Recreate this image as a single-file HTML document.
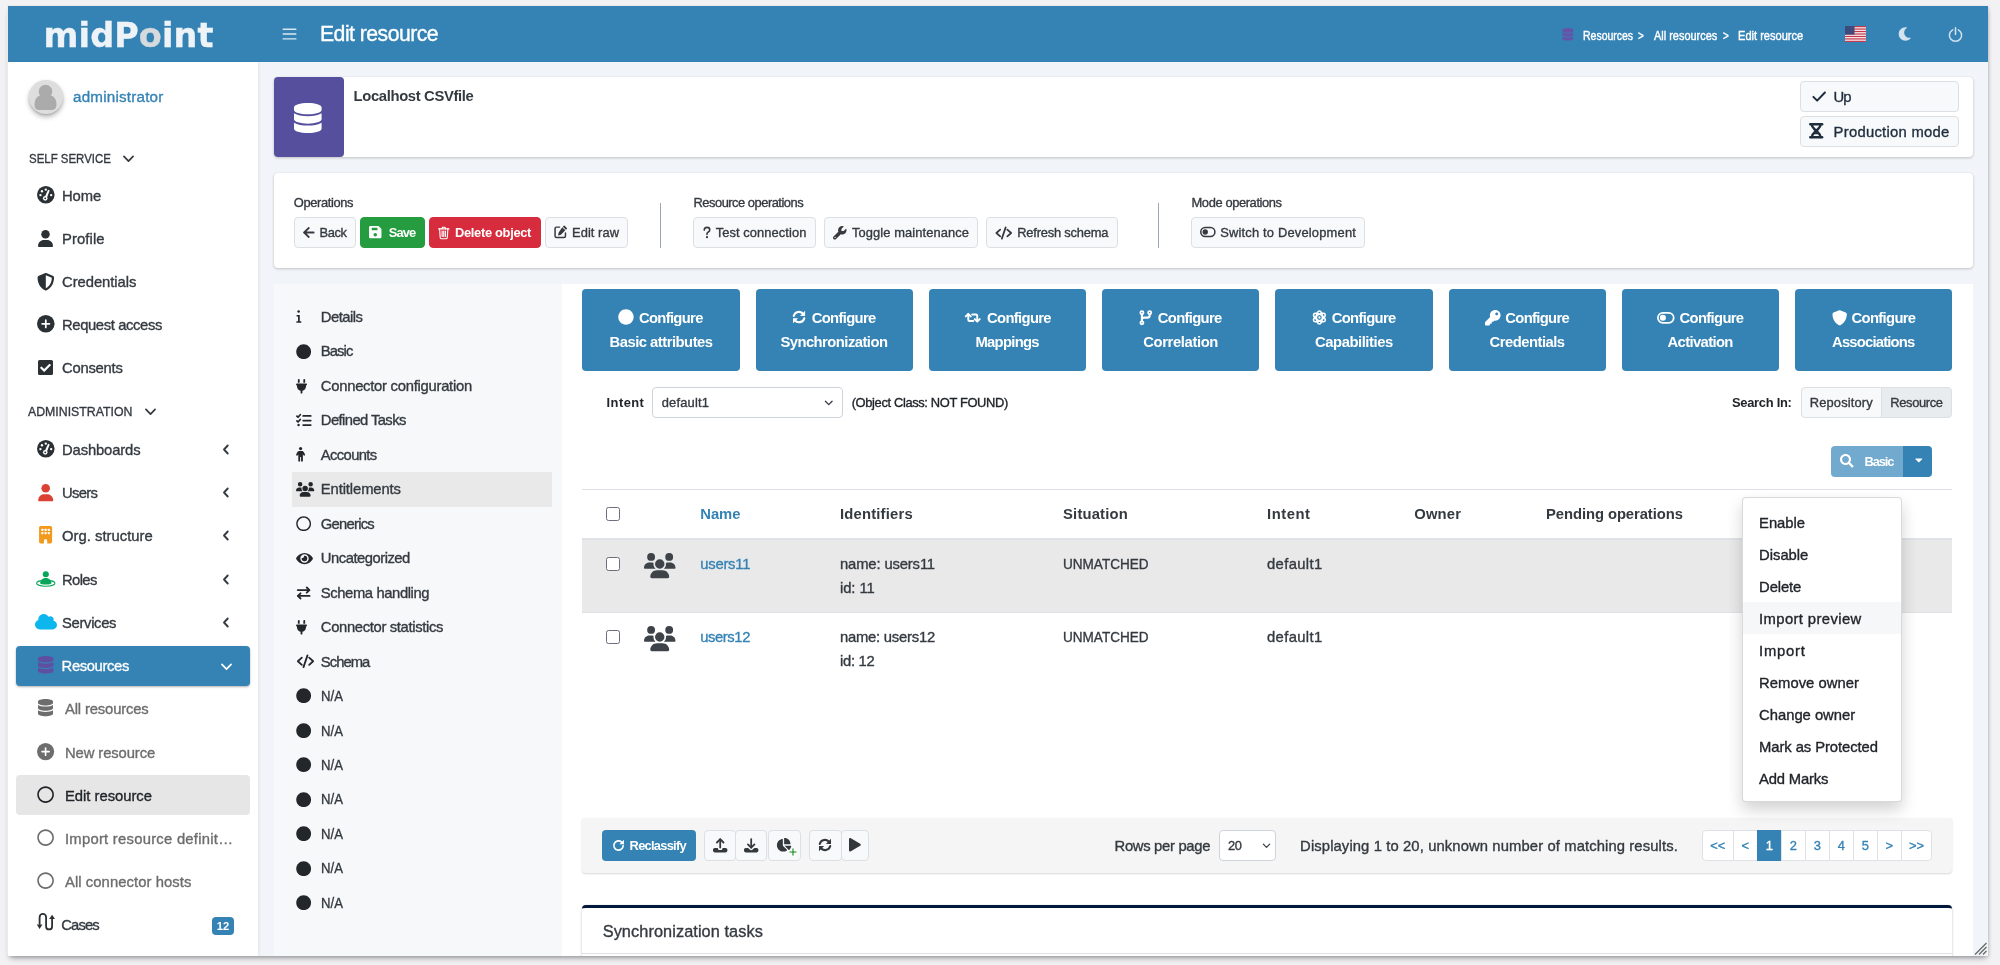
<!DOCTYPE html>
<html lang="en">
<head>
<meta charset="utf-8">
<title>Edit resource</title>
<style>
*{box-sizing:border-box}
html,body{margin:0;padding:0}
body{width:2000px;height:965px;overflow:hidden;background:#f2f2f4;position:relative;
 font-family:"Liberation Sans",sans-serif;font-size:14.8px;color:#212529;line-height:1}
.abs,.t{position:absolute}
.t{white-space:nowrap;-webkit-text-stroke:.35px currentColor}
svg.ic{display:block;position:absolute;overflow:visible}
b,.b{font-weight:bold}
#shadow{position:absolute;left:8px;top:6px;width:1980px;height:950px;background:#f1f4f8;box-shadow:-1px -1px 0 0 #ece9e8,0 4px 6px -2px rgba(0,0,0,.32),1px 1px 3px rgba(0,0,0,.14)}
#frame{position:absolute;left:0;top:0;width:2000px;height:965px;clip-path:inset(6px 12px 9px 8px);will-change:transform}
#header{left:8px;top:6px;width:1980px;height:56px;background:#3583b5}
#sidebar{left:8px;top:62px;width:250px;height:894px;background:#fff;box-shadow:1px 0 3px rgba(0,0,0,.07)}
.logo{font-family:"DejaVu Sans",sans-serif;font-weight:bold;font-size:33.5px;color:#eef3f8;letter-spacing:0.08px}
.sb{font-size:15px;color:#343a40}
.sb2{font-size:15px;color:#6c757d}
.bc{font-size:12.4px;color:#fff;-webkit-text-stroke:.4px #fff}
.hd{font-size:13.2px;color:#343a40;letter-spacing:.1px}
.card{background:#fff;border-radius:4px;box-shadow:0 0 1px rgba(0,0,0,.125),0 1px 3px rgba(0,0,0,.2)}
.btn{position:absolute;border:1px solid #dcdfe3;background:#f8f9fa;border-radius:4px;color:#343a40}
.btn .t{top:50%}
.nav{font-size:14px;color:#343a40}
.cfg{position:absolute;top:289px;height:82px;width:158px;background:#3583b5;border-radius:4px;color:#fff;font-weight:bold;font-size:14.6px;text-align:center}
.cfg .t{left:0;width:100%;text-align:center}
.th{font-weight:bold;font-size:14.6px;color:#212529}
.td{font-size:14.6px;color:#343a40}
.link{color:#3583b5}
.mi{font-size:14.8px;color:#212529;left:1759px}
.pg{position:absolute;top:830px;height:32px;border:1px solid #dee2e6;background:#fff;color:#3583b5;font-size:13.4px;text-align:center;line-height:30px}
</style>
</head>
<body>
<div id="shadow"></div>
<div id="frame">
<div id="header" class="abs"></div>
<div class="t logo" style="left:43.600px;top:16px;line-height:39px;height:39px">midP<span style="color:#d6dadd">o</span>int</div>
<svg class="ic" width="15" height="16" viewBox="0 0 448 512" fill="#dbe8f1" style="color:#dbe8f1;left:281.700px;top:26px"><rect x="0" y="80" width="448" height="44" rx="20"/><rect x="0" y="234" width="448" height="44" rx="20"/><rect x="0" y="388" width="448" height="44" rx="20"/></svg>
<div class="t " style="left:320px;top:22px;font-size:21.2px;line-height:23px;height:23px;letter-spacing:-0.52px;color:#fff;">Edit resource</div>
<svg class="ic" width="11.5" height="12.5" viewBox="0 0 448 512" fill="#6454a8" style="color:#6454a8;left:1562px;top:28.200px"><path d="M448 73.143v45.714C448 159.143 347.667 192 224 192S0 159.143 0 118.857V73.143C0 32.857 100.333 0 224 0s224 32.857 224 73.143zM448 176v102.857C448 319.143 347.667 352 224 352S0 319.143 0 278.857V176c48.125 33.143 136.208 48.572 224 48.572S399.874 209.143 448 176zm0 160v102.857C448 479.143 347.667 512 224 512S0 479.143 0 438.857V336c48.125 33.143 136.208 48.572 224 48.572S399.874 369.143 448 336z"/></svg>
<div class="t bc" style="left:1583px;top:29px;font-size:12.4px;line-height:14px;height:14px;transform:scaleX(0.8453);transform-origin:0 50%;color:#fff;">Resources</div>
<div class="t bc" style="left:1638.4px;top:29px;font-size:12.4px;line-height:14px;height:14px;transform:scaleX(0.8009);transform-origin:0 50%;color:#fff;">&gt;</div>
<div class="t bc" style="left:1654px;top:29px;font-size:12.4px;line-height:14px;height:14px;transform:scaleX(0.8832);transform-origin:0 50%;color:#fff;">All resources</div>
<div class="t bc" style="left:1722.8px;top:29px;font-size:12.4px;line-height:14px;height:14px;transform:scaleX(0.8009);transform-origin:0 50%;color:#fff;">&gt;</div>
<div class="t bc" style="left:1738.3px;top:29px;font-size:12.4px;line-height:14px;height:14px;transform:scaleX(0.8938);transform-origin:0 50%;color:#fff;">Edit resource</div>
<svg class="ic" style="left:1845px;top:26px" width="21" height="16" viewBox="0 0 21 16"><rect width="21" height="16" fill="#f4f4f4"/><g fill="#c8374a"><rect y="0" width="21" height="1.230"/><rect y="2.460" width="21" height="1.230"/><rect y="4.920" width="21" height="1.230"/><rect y="7.380" width="21" height="1.230"/><rect y="9.850" width="21" height="1.230"/><rect y="12.310" width="21" height="1.230"/><rect y="14.770" width="21" height="1.230"/></g><rect width="9.500" height="8.600" fill="#3f4a7d"/></svg>
<svg class="ic" width="13.5" height="14" viewBox="0 0 512 512" fill="#d3e3ee" style="color:#d3e3ee;left:1898px;top:27px"><path d="M283.211 512c78.962 0 151.079-35.925 198.857-94.792 7.068-8.708-.639-21.43-11.562-19.35-124.203 23.654-238.262-71.576-238.262-196.954 0-72.222 38.662-138.635 101.498-174.394 9.686-5.512 7.25-20.197-3.756-22.23A258.156 258.156 0 0 0 283.211 0c-141.309 0-256 114.511-256 256 0 141.309 114.511 256 256 256z"/></svg>
<svg class="ic" width="15" height="15" viewBox="0 0 512 512" fill="#d3e3ee" style="color:#d3e3ee;left:1947.500px;top:27.300px"><path d="M160 96 A208 208 0 1 0 352 96" fill="none" stroke="currentColor" stroke-width="52" stroke-linecap="round"/><rect x="230" y="0" width="52" height="280" rx="26"/></svg>

<div id="sidebar" class="abs"></div>
<div class="abs" style="left:28.500px;top:79.500px;width:34px;height:34px;border-radius:50%;background:#dedede;box-shadow:0 3px 5px rgba(0,0,0,.28),0 1px 2px rgba(0,0,0,.12);overflow:hidden"><svg class="ic" style="left:5.500px;top:4px" width="23" height="27" viewBox="0 0 23 27"><circle cx="11.500" cy="7.500" r="6.800" fill="#ababab"/><path d="M0.500 21 C0.500 14 4 11.500 7 11.500 C9 13.200 14 13.200 16 11.500 C19 11.500 22.500 14 22.500 21 C22.500 25 20 26 17 26 H6 C3 26 0.500 25 0.500 21z" fill="#ababab"/></svg></div>
<div class="t " style="left:73px;top:88px;font-size:15.2px;line-height:17px;height:17px;letter-spacing:0.21px;color:#3583b5;">administrator</div>
<div class="t " style="left:28.5px;top:151px;font-size:13.5px;line-height:15px;height:15px;transform:scaleX(0.8483);transform-origin:0 50%;color:#343a40;">SELF SERVICE</div>
<svg class="ic" width="13" height="13" viewBox="0 0 512 512" fill="#343a40" style="color:#343a40;left:121.500px;top:152px"><path d="M76 176 L256 360 L436 176" fill="none" stroke="currentColor" stroke-width="68" stroke-linecap="round" stroke-linejoin="round"/></svg>
<div class="t " style="left:28.3px;top:404px;font-size:13.5px;line-height:15px;height:15px;transform:scaleX(0.9118);transform-origin:0 50%;color:#343a40;">ADMINISTRATION</div>
<svg class="ic" width="13" height="13" viewBox="0 0 512 512" fill="#343a40" style="color:#343a40;left:143.500px;top:405.200px"><path d="M76 176 L256 360 L436 176" fill="none" stroke="currentColor" stroke-width="68" stroke-linecap="round" stroke-linejoin="round"/></svg>
<svg class="ic" width="17.6" height="17.6" viewBox="0 0 512 512" fill="#2b3035" style="color:#2b3035;left:36.70px;top:185.80px"><circle cx="256" cy="256" r="256"/><g fill="#fff"><circle cx="256" cy="104" r="34"/><circle cx="144" cy="152" r="34"/><circle cx="100" cy="264" r="34"/><circle cx="412" cy="264" r="34"/><circle cx="240" cy="360" r="66"/><path d="M216 340 L322 112 L370 134 L276 372z"/></g><circle cx="240" cy="360" r="28"/></svg>
<div class="t " style="left:62px;top:188px;font-size:14.8px;line-height:16px;height:16px;letter-spacing:-0.09px;color:#343a40;">Home</div>
<svg class="ic" width="15" height="17" viewBox="0 0 448 512" fill="#2b3035" style="color:#2b3035;left:38.00px;top:230.00px"><circle cx="224" cy="128" r="128"/><path d="M0 482.3C0 383.8 79.8 304 178.3 304h91.4C368.2 304 448 383.8 448 482.3c0 16.4-13.3 29.7-29.7 29.7H29.7C13.3 512 0 498.700 0 482.3z"/></svg>
<div class="t " style="left:62px;top:231px;font-size:14.8px;line-height:16px;height:16px;letter-spacing:0.11px;color:#343a40;">Profile</div>
<svg class="ic" width="17.6" height="17.6" viewBox="0 0 512 512" fill="#2b3035" style="color:#2b3035;left:36.70px;top:272.60px"><path d="M256 0c4.600 0 9.200 1 13.400 2.900L457.700 82.800c22 9.300 38.400 31 38.300 57.200-.5 99.200-41.300 280.700-213.600 363.200-16.700 8-36.100 8-52.800 0C57.300 420.700 16.500 239.200 16 140c-.1-26.200 16.300-47.900 38.300-57.200L242.700 2.900C246.800 1 251.400 0 256 0z"/><path fill="#fff" d="M256 66.800V445c138-66.800 175.100-214.800 176-303.400L256 66.800z"/></svg>
<div class="t " style="left:62px;top:274px;font-size:14.8px;line-height:16px;height:16px;letter-spacing:-0.04px;color:#343a40;">Credentials</div>
<svg class="ic" width="17.6" height="17.6" viewBox="0 0 512 512" fill="#2b3035" style="color:#2b3035;left:36.70px;top:315.40px"><circle cx="256" cy="256" r="256"/><path d="M256 150V362M150 256H362" stroke="#fff" stroke-width="50" stroke-linecap="round" fill="none"/></svg>
<div class="t " style="left:62px;top:317px;font-size:14.8px;line-height:16px;height:16px;letter-spacing:-0.38px;color:#343a40;">Request access</div>
<svg class="ic" width="15" height="15" viewBox="0 0 448 448" fill="#2b3035" style="color:#2b3035;left:38.00px;top:359.90px"><g transform="translate(0,-32)"><path d="M400 480H48c-26.51 0-48-21.49-48-48V80c0-26.51 21.49-48 48-48h352c26.51 0 48 21.49 48 48v352c0 26.51-21.49 48-48 48zm-204.686-98.059l184-184c6.248-6.248 6.248-16.379 0-22.627l-22.627-22.627c-6.248-6.248-16.379-6.249-22.628 0L184 302.745l-70.059-70.059c-6.248-6.248-16.379-6.248-22.628 0l-22.627 22.627c-6.248 6.248-6.248 16.379 0 22.627l104 104c6.249 6.25 16.379 6.25 22.628.001z"/></g></svg>
<div class="t " style="left:62px;top:360px;font-size:14.8px;line-height:16px;height:16px;letter-spacing:-0.23px;color:#343a40;">Consents</div>
<svg class="ic" width="17.6" height="17.6" viewBox="0 0 512 512" fill="#2b3035" style="color:#2b3035;left:36.70px;top:439.80px"><circle cx="256" cy="256" r="256"/><g fill="#fff"><circle cx="256" cy="104" r="34"/><circle cx="144" cy="152" r="34"/><circle cx="100" cy="264" r="34"/><circle cx="412" cy="264" r="34"/><circle cx="240" cy="360" r="66"/><path d="M216 340 L322 112 L370 134 L276 372z"/></g><circle cx="240" cy="360" r="28"/></svg>
<div class="t " style="left:62px;top:442px;font-size:14.8px;line-height:16px;height:16px;letter-spacing:-0.13px;color:#343a40;">Dashboards</div>
<svg class="ic" width="15.4" height="17.2" viewBox="0 0 448 512" fill="#dc4234" style="color:#dc4234;left:37.80px;top:483.70px"><circle cx="224" cy="128" r="128"/><path d="M0 482.3C0 383.8 79.8 304 178.3 304h91.4C368.2 304 448 383.8 448 482.3c0 16.4-13.3 29.7-29.7 29.7H29.7C13.3 512 0 498.700 0 482.3z"/></svg>
<div class="t " style="left:62px;top:485px;font-size:14.8px;line-height:16px;height:16px;letter-spacing:-0.66px;color:#343a40;">Users</div>
<svg class="ic" width="13.2" height="17.4" viewBox="0 0 384 512" fill="#f39a1e" style="color:#f39a1e;left:38.90px;top:525.90px"><path d="M48 0C21.500 0 0 21.500 0 48V464c0 26.500 21.500 48 48 48h96V432c0-26.500 21.500-48 48-48s48 21.500 48 48v80h96c26.500 0 48-21.500 48-48V48c0-26.500-21.500-48-48-48H48z"/><g fill="#fff"><rect x="64" y="80" width="64" height="64" rx="14"/><rect x="160" y="80" width="64" height="64" rx="14"/><rect x="256" y="80" width="64" height="64" rx="14"/><rect x="64" y="176" width="64" height="64" rx="14"/><rect x="160" y="176" width="64" height="64" rx="14"/><rect x="256" y="176" width="64" height="64" rx="14"/></g></svg>
<div class="t " style="left:62px;top:528px;font-size:14.8px;line-height:16px;height:16px;letter-spacing:0.02px;color:#343a40;">Org. structure</div>
<svg class="ic" width="19.6" height="15.7" viewBox="0 0 640 512" fill="#0aa55c" style="color:#0aa55c;left:35.70px;top:571.05px"><circle cx="320" cy="104" r="100"/><path d="M135 400C135 300 210 225 320 225S505 300 505 400C505 425 420 442 320 442S135 425 135 400z"/><ellipse cx="320" cy="400" rx="300" ry="96" fill="none" stroke="currentColor" stroke-width="34"/></svg>
<div class="t " style="left:62px;top:572px;font-size:14.8px;line-height:16px;height:16px;letter-spacing:-0.63px;color:#343a40;">Roles</div>
<svg class="ic" width="22" height="17.6" viewBox="0 0 640 512" fill="#0db7ee" style="color:#0db7ee;left:34.50px;top:613.10px"><path d="M537.6 226.6c4.1-10.7 6.4-22.4 6.4-34.6 0-53-43-96-96-96-19.7 0-38.1 6-53.3 16.2C367 64.2 315.3 32 256 32c-88.4 0-160 71.6-160 160 0 2.7.1 5.4.2 8.1C40.2 219.8 0 273.2 0 336c0 79.5 64.5 144 144 144h368c70.7 0 128-57.3 128-128 0-61.9-44-113.6-102.4-125.4z"/></svg>
<div class="t " style="left:62px;top:615px;font-size:14.8px;line-height:16px;height:16px;letter-spacing:-0.32px;color:#343a40;">Services</div>
<svg class="ic" width="8" height="13" viewBox="0 0 320 512" fill="#343a40" style="color:#343a40;left:221.500px;top:442.6px"><path d="M230 96 L80 256 L230 416" fill="none" stroke="currentColor" stroke-width="74" stroke-linecap="round" stroke-linejoin="round"/></svg>
<svg class="ic" width="8" height="13" viewBox="0 0 320 512" fill="#343a40" style="color:#343a40;left:221.500px;top:485.6px"><path d="M230 96 L80 256 L230 416" fill="none" stroke="currentColor" stroke-width="74" stroke-linecap="round" stroke-linejoin="round"/></svg>
<svg class="ic" width="8" height="13" viewBox="0 0 320 512" fill="#343a40" style="color:#343a40;left:221.500px;top:528.6px"><path d="M230 96 L80 256 L230 416" fill="none" stroke="currentColor" stroke-width="74" stroke-linecap="round" stroke-linejoin="round"/></svg>
<svg class="ic" width="8" height="13" viewBox="0 0 320 512" fill="#343a40" style="color:#343a40;left:221.500px;top:572.6px"><path d="M230 96 L80 256 L230 416" fill="none" stroke="currentColor" stroke-width="74" stroke-linecap="round" stroke-linejoin="round"/></svg>
<svg class="ic" width="8" height="13" viewBox="0 0 320 512" fill="#343a40" style="color:#343a40;left:221.500px;top:615.9px"><path d="M230 96 L80 256 L230 416" fill="none" stroke="currentColor" stroke-width="74" stroke-linecap="round" stroke-linejoin="round"/></svg>
<div class="abs" style="left:16px;top:646px;width:234px;height:40px;background:#3583b5;border-radius:4px;box-shadow:0 1px 3px rgba(0,0,0,.12),0 1px 2px rgba(0,0,0,.2)"></div>
<svg class="ic" width="15.4" height="17.6" viewBox="0 0 448 512" fill="#5e4fa2" style="color:#5e4fa2;left:37.800px;top:656.200px"><path d="M448 73.143v45.714C448 159.143 347.667 192 224 192S0 159.143 0 118.857V73.143C0 32.857 100.333 0 224 0s224 32.857 224 73.143zM448 176v102.857C448 319.143 347.667 352 224 352S0 319.143 0 278.857V176c48.125 33.143 136.208 48.572 224 48.572S399.874 209.143 448 176zm0 160v102.857C448 479.143 347.667 512 224 512S0 479.143 0 438.857V336c48.125 33.143 136.208 48.572 224 48.572S399.874 369.143 448 336z"/></svg>
<div class="t " style="left:61.6px;top:658px;font-size:14.8px;line-height:16px;height:16px;letter-spacing:-0.38px;color:#fff;-webkit-text-stroke:.3px #fff">Resources</div>
<svg class="ic" width="13" height="13" viewBox="0 0 512 512" fill="#fff" style="color:#fff;left:219.500px;top:659.500px"><path d="M76 176 L256 360 L436 176" fill="none" stroke="currentColor" stroke-width="68" stroke-linecap="round" stroke-linejoin="round"/></svg>
<div class="abs" style="left:16px;top:775px;width:234px;height:39.500px;background:#e6e6e6;border-radius:4px"></div>
<svg class="ic" width="15" height="17.2" viewBox="0 0 448 512" fill="#6d6d6d" style="color:#6d6d6d;left:38.00px;top:699.30px"><path d="M448 73.143v45.714C448 159.143 347.667 192 224 192S0 159.143 0 118.857V73.143C0 32.857 100.333 0 224 0s224 32.857 224 73.143zM448 176v102.857C448 319.143 347.667 352 224 352S0 319.143 0 278.857V176c48.125 33.143 136.208 48.572 224 48.572S399.874 209.143 448 176zm0 160v102.857C448 479.143 347.667 512 224 512S0 479.143 0 438.857V336c48.125 33.143 136.208 48.572 224 48.572S399.874 369.143 448 336z"/></svg>
<div class="t " style="left:65px;top:701px;font-size:14.8px;line-height:16px;height:16px;letter-spacing:-0.15px;color:#6d6d6d;">All resources</div>
<svg class="ic" width="17.2" height="17.2" viewBox="0 0 512 512" fill="#6d6d6d" style="color:#6d6d6d;left:36.90px;top:743.10px"><circle cx="256" cy="256" r="256"/><path d="M256 150V362M150 256H362" stroke="#fff" stroke-width="50" stroke-linecap="round" fill="none"/></svg>
<div class="t " style="left:65px;top:745px;font-size:14.8px;line-height:16px;height:16px;letter-spacing:-0.1px;color:#6d6d6d;">New resource</div>
<svg class="ic" width="17.2" height="17.2" viewBox="0 0 512 512" fill="#212529" style="color:#212529;left:36.90px;top:786.20px"><path d="M256 8C119 8 8 119 8 256s111 248 248 248 248-111 248-248S393 8 256 8zm0 448c-110.5 0-200-89.5-200-200S145.5 56 256 56s200 89.5 200 200-89.5 200-200 200z"/></svg>
<div class="t " style="left:65px;top:788px;font-size:14.8px;line-height:16px;height:16px;letter-spacing:-0.02px;color:#212529;">Edit resource</div>
<svg class="ic" width="17.2" height="17.2" viewBox="0 0 512 512" fill="#6d6d6d" style="color:#6d6d6d;left:36.90px;top:829.30px"><path d="M256 8C119 8 8 119 8 256s111 248 248 248 248-111 248-248S393 8 256 8zm0 448c-110.5 0-200-89.5-200-200S145.5 56 256 56s200 89.5 200 200-89.5 200-200 200z"/></svg>
<div class="t " style="left:65px;top:831px;font-size:14.8px;line-height:16px;height:16px;letter-spacing:0.26px;color:#6d6d6d;">Import resource definit…</div>
<svg class="ic" width="17.2" height="17.2" viewBox="0 0 512 512" fill="#6d6d6d" style="color:#6d6d6d;left:36.90px;top:872.00px"><path d="M256 8C119 8 8 119 8 256s111 248 248 248 248-111 248-248S393 8 256 8zm0 448c-110.5 0-200-89.5-200-200S145.5 56 256 56s200 89.5 200 200-89.5 200-200 200z"/></svg>
<div class="t " style="left:65px;top:874px;font-size:14.8px;line-height:16px;height:16px;letter-spacing:0.07px;color:#6d6d6d;">All connector hosts</div>
<svg class="ic" width="18.2" height="17.6" viewBox="0 0 182 176" fill="#2b3035" style="color:#2b3035;left:36.800px;top:913px"><path d="M26 118V41.500A32.500 32.500 0 0 1 91 41.500V134A30 30 0 0 0 151 134V48" fill="none" stroke="currentColor" stroke-width="18"/><path d="M-2 114H54L26 160zM122 60H180L151 18z"/></svg>
<div class="t " style="left:61.3px;top:917px;font-size:14.8px;line-height:16px;height:16px;letter-spacing:-0.89px;color:#343a40;">Cases</div>
<div class="abs" style="left:212px;top:917px;width:22px;height:18px;background:#3583b5;border-radius:4px"></div>
<div class="t " style="left:212px;top:920px;font-size:11.2px;line-height:12px;height:12px;width:22px;text-align:center;font-weight:bold;-webkit-text-stroke:0;color:#fff;">12</div>

<div class="abs card" style="left:274px;top:77px;width:1699px;height:80px"></div>
<div class="abs" style="left:274px;top:77px;width:70px;height:80px;background:#564f9d;border-radius:4px"></div>
<svg class="ic" width="27.6" height="30" viewBox="0 0 448 512" preserveAspectRatio="none" fill="#fff" style="color:#fff;left:294.400px;top:102.800px"><path d="M448 73.143v45.714C448 159.143 347.667 192 224 192S0 159.143 0 118.857V73.143C0 32.857 100.333 0 224 0s224 32.857 224 73.143zM448 176v102.857C448 319.143 347.667 352 224 352S0 319.143 0 278.857V176c48.125 33.143 136.208 48.572 224 48.572S399.874 209.143 448 176zm0 160v102.857C448 479.143 347.667 512 224 512S0 479.143 0 438.857V336c48.125 33.143 136.208 48.572 224 48.572S399.874 369.143 448 336z"/></svg>
<div class="t " style="left:353.6px;top:88px;font-size:14.8px;line-height:16px;height:16px;letter-spacing:-0.35px;font-weight:bold;-webkit-text-stroke:0;color:#343a40;">Localhost CSVfile</div>
<div class="abs" style="left:1800px;top:81px;width:158.6px;height:30.6px;background:#f8f9fa;border:1px solid #dcdfe3;border-radius:4px"></div>
<svg class="ic" width="14.3" height="11.2" viewBox="0 0 512 400" fill="#1f2d3d" style="color:#1f2d3d;left:1811.700px;top:90.900px"><path d="M50 210L184 344L462 56" fill="none" stroke="currentColor" stroke-width="72" stroke-linecap="round" stroke-linejoin="round"/></svg>
<div class="t " style="left:1833.6px;top:89px;font-size:14.8px;line-height:16px;height:16px;letter-spacing:-0.92px;color:#1f2d3d;">Up</div>
<div class="abs" style="left:1800px;top:116px;width:158.6px;height:30.6px;background:#f8f9fa;border:1px solid #dcdfe3;border-radius:4px"></div>
<svg class="ic" width="14.4" height="15.6" viewBox="0 0 384 416" fill="#1f2d3d" style="color:#1f2d3d;left:1809.300px;top:123.200px"><g fill="none" stroke="currentColor" stroke-width="66" stroke-linecap="round" stroke-linejoin="round"><path d="M34 34H350"/><path d="M34 382H350"/><path d="M76 40C76 130 150 160 192 208C234 256 308 286 308 376"/><path d="M308 40C308 130 234 160 192 208C150 256 76 286 76 376"/></g><path d="M140 170H244L192 216zM150 250H234L270 300H114z"/></svg>
<div class="t " style="left:1833.6px;top:124px;font-size:14.8px;line-height:16px;height:16px;letter-spacing:0.27px;color:#1f2d3d;">Production mode</div>
<div class="abs card" style="left:274px;top:172.800px;width:1699px;height:95px"></div>
<div class="t " style="left:293.8px;top:195px;font-size:12.9px;line-height:15px;height:15px;letter-spacing:-0.38px;color:#343a40;">Operations</div>
<div class="t " style="left:693.5px;top:195px;font-size:12.9px;line-height:15px;height:15px;letter-spacing:-0.49px;color:#343a40;">Resource operations</div>
<div class="t " style="left:1191.5px;top:195px;font-size:12.9px;line-height:15px;height:15px;letter-spacing:-0.39px;color:#343a40;">Mode operations</div>
<div class="abs" style="left:660px;top:203px;width:1px;height:44.500px;background:#9ca6b4"></div>
<div class="abs" style="left:1158px;top:203px;width:1px;height:44.500px;background:#9ca6b4"></div>
<div class="abs" style="left:294px;top:217px;width:62px;height:31px;background:#f8f9fa;border:1px solid #dcdfe3;border-radius:4px"></div>
<svg class="ic" width="11.5" height="13" viewBox="0 0 448 512" fill="#343a40" style="color:#343a40;left:302.700px;top:225.800px"><path d="M257.5 445.1l-22.2 22.2c-9.4 9.4-24.6 9.4-33.9 0L7 273c-9.4-9.4-9.4-24.6 0-33.9L201.4 44.7c9.4-9.4 24.6-9.4 33.9 0l22.2 22.2c9.5 9.5 9.3 25-.4 34.3L136.6 216H424c13.3 0 24 10.7 24 24v32c0 13.3-10.7 24-24 24H136.6l120.5 114.8c9.8 9.3 10 24.8.4 34.3z"/></svg>
<div class="t " style="left:319.5px;top:225px;font-size:12.9px;line-height:15px;height:15px;letter-spacing:-0.39px;color:#343a40;">Back</div>
<div class="abs" style="left:360px;top:217px;width:65px;height:31px;background:#259c40;border:1px solid #259c40;border-radius:4px"></div>
<svg class="ic" width="12.5" height="14.2" viewBox="0 0 448 512" fill="#fff" style="color:#fff;left:369px;top:225px"><path d="M48 32C21.500 32 0 53.500 0 80V432c0 26.500 21.500 48 48 48H400c26.500 0 48-21.500 48-48V163.900c0-12.700-5.100-24.900-14.100-33.900L350 46.100c-9-9-21.200-14.100-33.900-14.100H48zM96 112c0-8.800 7.200-16 16-16H288c8.800 0 16 7.200 16 16v64c0 8.800-7.200 16-16 16H112c-8.800 0-16-7.200-16-16V112zM224 288a64 64 0 1 1 0 128 64 64 0 1 1 0-128z"/></svg>
<div class="t " style="left:388.7px;top:225px;font-size:12.9px;line-height:15px;height:15px;letter-spacing:-0.88px;font-weight:bold;-webkit-text-stroke:0;color:#fff;">Save</div>
<div class="abs" style="left:429px;top:217px;width:112px;height:31px;background:#d62c3e;border:1px solid #d62c3e;border-radius:4px"></div>
<svg class="ic" width="11.5" height="13.6" viewBox="0 0 448 512" fill="#fff" style="color:#fff;left:438.300px;top:225.500px"><g fill="none" stroke="currentColor" stroke-width="44" stroke-linecap="round" stroke-linejoin="round"><path d="M22 104 H426"/><path d="M150 100 L176 40 H272 L298 100"/><path d="M64 110 L86 452 Q88 488 124 488 H324 Q360 488 362 452 L384 110"/><path d="M160 190 V400"/><path d="M224 190 V400"/><path d="M288 190 V400"/></g></svg>
<div class="t " style="left:455px;top:225px;font-size:12.9px;line-height:15px;height:15px;letter-spacing:-0.32px;font-weight:bold;-webkit-text-stroke:0;color:#fff;">Delete object</div>
<div class="abs" style="left:545px;top:217px;width:83px;height:31px;background:#f8f9fa;border:1px solid #dcdfe3;border-radius:4px"></div>
<svg class="ic" width="13.6" height="13.6" viewBox="0 0 512 512" fill="#343a40" style="color:#343a40;left:553.600px;top:225px"><path d="M210 80 H96 Q40 80 40 136 V416 Q40 472 96 472 H376 Q432 472 432 416 V302" fill="none" stroke="currentColor" stroke-width="56" stroke-linecap="round" stroke-linejoin="round"/><path d="M402 30 L482 110 Q500 128 482 146 L450 178 L334 62 L366 30 Q384 12 402 30z M310 86 L426 202 L260 368 L170 392 Q150 396 154 376 L176 284z"/></svg>
<div class="t " style="left:572px;top:225px;font-size:12.9px;line-height:15px;height:15px;letter-spacing:0.06px;color:#343a40;">Edit raw</div>
<div class="abs" style="left:693px;top:217px;width:123px;height:31px;background:#f8f9fa;border:1px solid #dcdfe3;border-radius:4px"></div>
<svg class="ic" width="8" height="13" viewBox="0 0 320 512" fill="#343a40" style="color:#343a40;left:702.700px;top:225.800px"><path d="M50 160 Q50 50 160 50 Q270 50 270 150 Q270 220 200 250 Q160 268 160 320 V336" fill="none" stroke="currentColor" stroke-width="64" stroke-linecap="round" stroke-linejoin="round"/><circle cx="160" cy="444" r="44"/></svg>
<div class="t " style="left:715.7px;top:225px;font-size:12.9px;line-height:15px;height:15px;letter-spacing:0.08px;color:#343a40;">Test connection</div>
<div class="abs" style="left:824px;top:217px;width:154px;height:31px;background:#f8f9fa;border:1px solid #dcdfe3;border-radius:4px"></div>
<svg class="ic" width="13.5" height="13.5" viewBox="0 0 512 512" fill="#343a40" style="color:#343a40;left:833px;top:225.600px"><path d="M352 320c88.400 0 160-71.600 160-160c0-15.300-2.200-30.100-6.200-44.200c-3.100-10.800-16.400-13.200-24.300-5.300l-76.800 76.800c-3 3-7.100 4.700-11.300 4.700H336c-8.800 0-16-7.200-16-16V118.600c0-4.200 1.700-8.300 4.700-11.300l76.800-76.800c7.900-7.900 5.400-21.200-5.300-24.300C382.100 2.200 367.300 0 352 0C263.600 0 192 71.600 192 160c0 19.100 3.400 37.500 9.500 54.500L19.900 396.100C7.200 408.800 0 426.100 0 444.100C0 481.600 30.400 512 67.900 512c18 0 35.300-7.200 48-19.900L297.500 310.500c17 6.200 35.400 9.500 54.500 9.500zM80 408a24 24 0 1 1 0 48 24 24 0 1 1 0-48z"/></svg>
<div class="t " style="left:852px;top:225px;font-size:12.9px;line-height:15px;height:15px;letter-spacing:0.09px;color:#343a40;">Toggle maintenance</div>
<div class="abs" style="left:986px;top:217px;width:132px;height:31px;background:#f8f9fa;border:1px solid #dcdfe3;border-radius:4px"></div>
<svg class="ic" width="17.5" height="14" viewBox="0 0 640 512" fill="#343a40" style="color:#343a40;left:995px;top:225.500px"><g fill="none" stroke="currentColor" stroke-width="64" stroke-linecap="round" stroke-linejoin="round"><path d="M190 130 L50 256 L190 382"/><path d="M450 130 L590 256 L450 382"/><path d="M390 50 L250 462"/></g></svg>
<div class="t " style="left:1017.2px;top:225px;font-size:12.9px;line-height:15px;height:15px;letter-spacing:-0.2px;color:#343a40;">Refresh schema</div>
<div class="abs" style="left:1191px;top:217px;width:174px;height:31px;background:#f8f9fa;border:1px solid #dcdfe3;border-radius:4px"></div>
<svg class="ic" width="15.7" height="14" viewBox="0 0 576 512" fill="#343a40" style="color:#343a40;left:1200px;top:224.800px"><rect x="28" y="92" width="520" height="328" rx="164" fill="none" stroke="currentColor" stroke-width="56"/><circle cx="192" cy="256" r="100"/></svg>
<div class="t " style="left:1220.2px;top:225px;font-size:12.9px;line-height:15px;height:15px;letter-spacing:0.19px;color:#343a40;">Switch to Development</div>

<div class="abs" style="left:274px;top:284px;width:288px;height:680px;background:#f7f8fa"></div>
<div class="abs" style="left:292px;top:471.700px;width:260px;height:35.400px;background:#e9e9e9"></div>
<svg class="ic" width="5.7" height="13" viewBox="0 0 224 512" fill="#23272b" style="color:#23272b;left:296.3px;top:310.4px"><circle cx="104" cy="62" r="50"/><path d="M24 196h124v244h60v64H16v-64h64V260H24z"/></svg>
<div class="t " style="left:320.8px;top:309px;font-size:14.8px;line-height:16px;height:16px;letter-spacing:-0.52px;color:#343a40;">Details</div>
<svg class="ic" width="15.3" height="15.3" viewBox="0 0 512 512" fill="#23272b" style="color:#23272b;left:296.3px;top:343.72px"><path d="M256 8C119 8 8 119 8 256s111 248 248 248 248-111 248-248S393 8 256 8z"/></svg>
<div class="t " style="left:320.8px;top:343px;font-size:14.8px;line-height:16px;height:16px;letter-spacing:-0.92px;color:#343a40;">Basic</div>
<svg class="ic" width="11" height="14.6" viewBox="0 0 384 512" fill="#23272b" style="color:#23272b;left:296.3px;top:378.54px"><path d="M96 0C78.300 0 64 14.300 64 32v96h64V32c0-17.700-14.300-32-32-32zM288 0c-17.700 0-32 14.300-32 32v96h64V32c0-17.700-14.300-32-32-32zM32 160c-17.700 0-32 14.300-32 32s14.300 32 32 32v32c0 77.400 55 142 128 156.800V480c0 17.700 14.300 32 32 32s32-14.300 32-32V412.800C297 398 352 333.400 352 256V224c17.700 0 32-14.300 32-32s-14.300-32-32-32H32z"/></svg>
<div class="t " style="left:320.8px;top:378px;font-size:14.8px;line-height:16px;height:16px;letter-spacing:-0.26px;color:#343a40;">Connector configuration</div>
<svg class="ic" width="15.6" height="12.2" viewBox="0 0 512 400" fill="#23272b" style="color:#23272b;left:296.3px;top:414.21px"><g fill="none" stroke="currentColor" stroke-width="58" stroke-linecap="round" stroke-linejoin="round"><path d="M30 70L66 106L140 24"/><path d="M30 226L66 262L140 180"/><path d="M236 64H484"/><path d="M236 214H484"/><path d="M236 364H484"/></g><circle cx="84" cy="364" r="40"/></svg>
<div class="t " style="left:320.8px;top:412px;font-size:14.8px;line-height:16px;height:16px;letter-spacing:-0.59px;color:#343a40;">Defined Tasks</div>
<svg class="ic" width="9.2" height="14.7" viewBox="0 0 320 512" fill="#23272b" style="color:#23272b;left:296.3px;top:447.43px"><circle cx="160" cy="56" r="56"/><path d="M120 136h80c40 0 66 24 82 56l32 66c8 16 2 34-14 42s-34 2-42-14l-18-36V480c0 18-14 32-32 32s-32-14-32-32V352h-32v128c0 18-14 32-32 32s-32-14-32-32V250l-18 36c-8 16-26 22-42 14s-22-26-14-42l32-66c16-32 42-56 82-56z"/></svg>
<div class="t " style="left:320.8px;top:447px;font-size:14.8px;line-height:16px;height:16px;letter-spacing:-0.64px;color:#343a40;">Accounts</div>
<svg class="ic" width="18.3" height="14.64" viewBox="0 0 640 512" fill="#23272b" style="color:#23272b;left:296.3px;top:481.93px"><path d="M144 0a80 80 0 1 1 0 160A80 80 0 1 1 144 0zM512 0a80 80 0 1 1 0 160A80 80 0 1 1 512 0zM0 298.700C0 239.800 47.800 192 106.700 192h42.700c15.900 0 31 3.500 44.600 9.700c-1.300 7.200-1.900 14.700-1.900 22.300c0 38.200 16.800 72.500 43.300 96c-.2 0-.4 0-.7 0H21.300C9.600 320 0 310.400 0 298.700zM405.300 320c-.2 0-.4 0-.7 0c26.600-23.500 43.300-57.800 43.300-96c0-7.600-.7-15-1.900-22.300c13.600-6.300 28.700-9.700 44.600-9.700h42.700C592.200 192 640 239.800 640 298.700c0 11.800-9.600 21.300-21.300 21.300H405.300zM224 224a96 96 0 1 1 192 0 96 96 0 1 1 -192 0zM128 485.300C128 411.700 187.700 352 261.300 352H378.700C452.300 352 512 411.700 512 485.300c0 14.700-11.900 26.700-26.700 26.700H154.700c-14.700 0-26.700-11.900-26.700-26.700z"/></svg>
<div class="t " style="left:320.8px;top:481px;font-size:14.8px;line-height:16px;height:16px;letter-spacing:-0.11px;color:#343a40;">Entitlements</div>
<svg class="ic" width="15.3" height="15.3" viewBox="0 0 512 512" fill="#23272b" style="color:#23272b;left:296.3px;top:516.07px"><path d="M256 8C119 8 8 119 8 256s111 248 248 248 248-111 248-248S393 8 256 8zm0 448c-110.5 0-200-89.5-200-200S145.5 56 256 56s200 89.5 200 200-89.5 200-200 200z"/></svg>
<div class="t " style="left:320.8px;top:516px;font-size:14.8px;line-height:16px;height:16px;letter-spacing:-0.75px;color:#343a40;">Generics</div>
<svg class="ic" width="17" height="15" viewBox="0 0 576 512" fill="#23272b" style="color:#23272b;left:296.3px;top:550.69px"><path d="M572.52 241.4C518.29 135.59 410.93 64 288 64S57.68 135.64 3.48 241.41a32.35 32.35 0 0 0 0 29.19C57.71 376.41 165.07 448 288 448s230.32-71.64 284.52-177.41a32.35 32.35 0 0 0 0-29.19zM288 400a144 144 0 1 1 144-144 143.93 143.93 0 0 1-144 144zm0-240a95.31 95.31 0 0 0-25.31 3.79 47.85 47.85 0 0 1-66.9 66.9A95.78 95.78 0 1 0 288 160z"/></svg>
<div class="t " style="left:320.8px;top:550px;font-size:14.8px;line-height:16px;height:16px;letter-spacing:-0.49px;color:#343a40;">Uncategorized</div>
<svg class="ic" width="15.3" height="14" viewBox="0 0 512 512" fill="#23272b" style="color:#23272b;left:296.3px;top:585.66px"><g fill="none" stroke="currentColor" stroke-width="68" stroke-linecap="round" stroke-linejoin="round"><path d="M40 150H460"/><path d="M370 56L466 150L370 244"/><path d="M472 362H52"/><path d="M142 268L46 362L142 456"/></g></svg>
<div class="t " style="left:320.8px;top:585px;font-size:14.8px;line-height:16px;height:16px;letter-spacing:-0.4px;color:#343a40;">Schema handling</div>
<svg class="ic" width="11" height="14.6" viewBox="0 0 384 512" fill="#23272b" style="color:#23272b;left:296.3px;top:619.83px"><path d="M96 0C78.300 0 64 14.300 64 32v96h64V32c0-17.700-14.300-32-32-32zM288 0c-17.700 0-32 14.300-32 32v96h64V32c0-17.700-14.300-32-32-32zM32 160c-17.700 0-32 14.300-32 32s14.300 32 32 32v32c0 77.400 55 142 128 156.800V480c0 17.700 14.300 32 32 32s32-14.300 32-32V412.800C297 398 352 333.400 352 256V224c17.700 0 32-14.300 32-32s-14.300-32-32-32H32z"/></svg>
<div class="t " style="left:320.8px;top:619px;font-size:14.8px;line-height:16px;height:16px;letter-spacing:-0.34px;color:#343a40;">Connector statistics</div>
<svg class="ic" width="19" height="14.5" viewBox="0 0 640 512" fill="#23272b" style="color:#23272b;left:296.3px;top:654.35px"><g fill="none" stroke="currentColor" stroke-width="64" stroke-linecap="round" stroke-linejoin="round"><path d="M190 130 L50 256 L190 382"/><path d="M450 130 L590 256 L450 382"/><path d="M390 50 L250 462"/></g></svg>
<div class="t " style="left:320.8px;top:654px;font-size:14.8px;line-height:16px;height:16px;letter-spacing:-0.96px;color:#343a40;">Schema</div>
<svg class="ic" width="15.3" height="15.3" viewBox="0 0 512 512" fill="#23272b" style="color:#23272b;left:296.3px;top:688.42px"><path d="M256 8C119 8 8 119 8 256s111 248 248 248 248-111 248-248S393 8 256 8z"/></svg>
<div class="t " style="left:320.8px;top:688px;font-size:14.8px;line-height:16px;height:16px;transform:scaleX(0.8876);transform-origin:0 50%;color:#343a40;">N/A</div>
<svg class="ic" width="15.3" height="15.3" viewBox="0 0 512 512" fill="#23272b" style="color:#23272b;left:296.3px;top:722.89px"><path d="M256 8C119 8 8 119 8 256s111 248 248 248 248-111 248-248S393 8 256 8z"/></svg>
<div class="t " style="left:320.8px;top:723px;font-size:14.8px;line-height:16px;height:16px;transform:scaleX(0.8876);transform-origin:0 50%;color:#343a40;">N/A</div>
<svg class="ic" width="15.3" height="15.3" viewBox="0 0 512 512" fill="#23272b" style="color:#23272b;left:296.3px;top:757.36px"><path d="M256 8C119 8 8 119 8 256s111 248 248 248 248-111 248-248S393 8 256 8z"/></svg>
<div class="t " style="left:320.8px;top:757px;font-size:14.8px;line-height:16px;height:16px;transform:scaleX(0.8876);transform-origin:0 50%;color:#343a40;">N/A</div>
<svg class="ic" width="15.3" height="15.3" viewBox="0 0 512 512" fill="#23272b" style="color:#23272b;left:296.3px;top:791.83px"><path d="M256 8C119 8 8 119 8 256s111 248 248 248 248-111 248-248S393 8 256 8z"/></svg>
<div class="t " style="left:320.8px;top:791px;font-size:14.8px;line-height:16px;height:16px;transform:scaleX(0.8876);transform-origin:0 50%;color:#343a40;">N/A</div>
<svg class="ic" width="15.3" height="15.3" viewBox="0 0 512 512" fill="#23272b" style="color:#23272b;left:296.3px;top:826.3px"><path d="M256 8C119 8 8 119 8 256s111 248 248 248 248-111 248-248S393 8 256 8z"/></svg>
<div class="t " style="left:320.8px;top:826px;font-size:14.8px;line-height:16px;height:16px;transform:scaleX(0.8876);transform-origin:0 50%;color:#343a40;">N/A</div>
<svg class="ic" width="15.3" height="15.3" viewBox="0 0 512 512" fill="#23272b" style="color:#23272b;left:296.3px;top:860.77px"><path d="M256 8C119 8 8 119 8 256s111 248 248 248 248-111 248-248S393 8 256 8z"/></svg>
<div class="t " style="left:320.8px;top:860px;font-size:14.8px;line-height:16px;height:16px;transform:scaleX(0.8876);transform-origin:0 50%;color:#343a40;">N/A</div>
<svg class="ic" width="15.3" height="15.3" viewBox="0 0 512 512" fill="#23272b" style="color:#23272b;left:296.3px;top:895.24px"><path d="M256 8C119 8 8 119 8 256s111 248 248 248 248-111 248-248S393 8 256 8z"/></svg>
<div class="t " style="left:320.8px;top:895px;font-size:14.8px;line-height:16px;height:16px;transform:scaleX(0.8876);transform-origin:0 50%;color:#343a40;">N/A</div>

<div class="abs" style="left:562px;top:284px;width:1411px;height:680px;background:#fff;"></div>
<div class="abs" style="left:582.33px;top:289px;width:157.4px;height:82px;background:#3583b5;border-radius:4px"></div>
<svg class="ic" width="15.9" height="15.9" viewBox="0 0 512 512" fill="#fff" style="color:#fff;left:618px;top:309.35px"><path d="M256 8C119 8 8 119 8 256s111 248 248 248 248-111 248-248S393 8 256 8z"/></svg>
<div class="t " style="left:638.9px;top:310px;font-size:14.8px;line-height:16px;height:16px;letter-spacing:-0.67px;font-weight:bold;-webkit-text-stroke:0;color:#fff;">Configure</div>
<div class="t " style="left:609.5px;top:334px;font-size:14.8px;line-height:16px;height:16px;letter-spacing:-0.5px;font-weight:bold;-webkit-text-stroke:0;color:#fff;">Basic attributes</div>
<div class="abs" style="left:755.57px;top:289px;width:157.4px;height:82px;background:#3583b5;border-radius:4px"></div>
<svg class="ic" width="14.1" height="14.1" viewBox="0 0 512 512" fill="#fff" style="color:#fff;left:792px;top:310.25px"><g fill="none" stroke="currentColor" stroke-width="76" stroke-linecap="round" stroke-linejoin="round"><path d="M64 216A198 198 0 0 1 414 148"/><path d="M448 296A198 198 0 0 1 98 364"/></g><path d="M476 30V216H290z M36 482V296H222z"/></svg>
<div class="t " style="left:811.7px;top:310px;font-size:14.8px;line-height:16px;height:16px;letter-spacing:-0.67px;font-weight:bold;-webkit-text-stroke:0;color:#fff;">Configure</div>
<div class="t " style="left:780.4px;top:334px;font-size:14.8px;line-height:16px;height:16px;letter-spacing:-0.54px;font-weight:bold;-webkit-text-stroke:0;color:#fff;">Synchronization</div>
<div class="abs" style="left:928.81px;top:289px;width:157.4px;height:82px;background:#3583b5;border-radius:4px"></div>
<svg class="ic" width="17.5" height="13.5" viewBox="0 0 640 512" fill="#fff" style="color:#fff;left:964px;top:310.55px"><g fill="none" stroke="currentColor" stroke-width="74" stroke-linecap="round" stroke-linejoin="round"><path d="M150 130V330Q150 380 200 380H340"/><path d="M56 204L150 110L244 204"/><path d="M490 382V182Q490 132 440 132H300"/><path d="M396 308L490 402L584 308"/></g></svg>
<div class="t " style="left:987.1px;top:310px;font-size:14.8px;line-height:16px;height:16px;letter-spacing:-0.67px;font-weight:bold;-webkit-text-stroke:0;color:#fff;">Configure</div>
<div class="t " style="left:975.4px;top:334px;font-size:14.8px;line-height:16px;height:16px;letter-spacing:-0.7px;font-weight:bold;-webkit-text-stroke:0;color:#fff;">Mappings</div>
<div class="abs" style="left:1102.05px;top:289px;width:157.4px;height:82px;background:#3583b5;border-radius:4px"></div>
<svg class="ic" width="13.6" height="15.6" viewBox="0 0 448 512" fill="#fff" style="color:#fff;left:1139.3px;top:309.5px"><g fill="none" stroke="currentColor" stroke-width="68" stroke-linecap="round" stroke-linejoin="round"><path d="M96 150V370"/><path d="M352 150V180Q352 250 282 250H166Q96 250 96 320"/></g><g fill="none" stroke="currentColor" stroke-width="58"><circle cx="96" cy="92" r="52"/><circle cx="352" cy="92" r="52"/><circle cx="96" cy="422" r="52"/></g></svg>
<div class="t " style="left:1157.8px;top:310px;font-size:14.8px;line-height:16px;height:16px;letter-spacing:-0.67px;font-weight:bold;-webkit-text-stroke:0;color:#fff;">Configure</div>
<div class="t " style="left:1143.3px;top:334px;font-size:14.8px;line-height:16px;height:16px;letter-spacing:-0.39px;font-weight:bold;-webkit-text-stroke:0;color:#fff;">Correlation</div>
<div class="abs" style="left:1275.29px;top:289px;width:157.4px;height:82px;background:#3583b5;border-radius:4px"></div>
<svg class="ic" width="14.8" height="15" viewBox="0 0 512 512" fill="#fff" style="color:#fff;left:1311.8px;top:309.8px"><g fill="none" stroke="currentColor" stroke-width="54"><ellipse cx="256" cy="256" rx="104" ry="228"/><ellipse cx="256" cy="256" rx="104" ry="228" transform="rotate(60 256 256)"/><ellipse cx="256" cy="256" rx="104" ry="228" transform="rotate(120 256 256)"/></g><circle cx="256" cy="256" r="40"/></svg>
<div class="t " style="left:1331.7px;top:310px;font-size:14.8px;line-height:16px;height:16px;letter-spacing:-0.67px;font-weight:bold;-webkit-text-stroke:0;color:#fff;">Configure</div>
<div class="t " style="left:1315px;top:334px;font-size:14.8px;line-height:16px;height:16px;letter-spacing:-0.44px;font-weight:bold;-webkit-text-stroke:0;color:#fff;">Capabilities</div>
<div class="abs" style="left:1448.53px;top:289px;width:157.4px;height:82px;background:#3583b5;border-radius:4px"></div>
<svg class="ic" width="15.6" height="15.6" viewBox="0 0 512 512" fill="#fff" style="color:#fff;left:1484.9px;top:309.5px"><path d="M512 176.001C512 273.203 433.202 352 336 352c-11.22 0-22.19-1.062-32.827-3.069l-24.012 27.014A23.999 23.999 0 0 1 261.223 384H224v40c0 13.255-10.745 24-24 24h-40v40c0 13.255-10.745 24-24 24H24c-13.255 0-24-10.745-24-24v-78.059c0-6.365 2.529-12.47 7.029-16.971l161.802-161.802C163.108 213.814 160 195.271 160 176 160 78.798 238.797.001 335.999 0 433.488-.001 512 78.511 512 176.001zM336 128c0 26.51 21.49 48 48 48s48-21.49 48-48-21.49-48-48-48-48 21.49-48 48z"/></svg>
<div class="t " style="left:1505.3px;top:310px;font-size:14.8px;line-height:16px;height:16px;letter-spacing:-0.67px;font-weight:bold;-webkit-text-stroke:0;color:#fff;">Configure</div>
<div class="t " style="left:1489.6px;top:334px;font-size:14.8px;line-height:16px;height:16px;letter-spacing:-0.51px;font-weight:bold;-webkit-text-stroke:0;color:#fff;">Credentials</div>
<div class="abs" style="left:1621.77px;top:289px;width:157.4px;height:82px;background:#3583b5;border-radius:4px"></div>
<svg class="ic" width="17.6" height="15.6" viewBox="0 0 576 512" fill="#fff" style="color:#fff;left:1657px;top:309.5px"><rect x="28" y="92" width="520" height="328" rx="164" fill="none" stroke="currentColor" stroke-width="56"/><circle cx="192" cy="256" r="100"/></svg>
<div class="t " style="left:1679.6px;top:310px;font-size:14.8px;line-height:16px;height:16px;letter-spacing:-0.67px;font-weight:bold;-webkit-text-stroke:0;color:#fff;">Configure</div>
<div class="t " style="left:1667.5px;top:334px;font-size:14.8px;line-height:16px;height:16px;letter-spacing:-0.63px;font-weight:bold;-webkit-text-stroke:0;color:#fff;">Activation</div>
<div class="abs" style="left:1795.01px;top:289px;width:157.4px;height:82px;background:#3583b5;border-radius:4px"></div>
<svg class="ic" width="15.3" height="15.6" viewBox="0 0 512 512" fill="#fff" style="color:#fff;left:1831.5px;top:309.5px"><path d="M256 0c4.600 0 9.200 1 13.400 2.900L457.700 82.800c22 9.300 38.400 31 38.300 57.200-.5 99.200-41.300 280.700-213.600 363.200-16.700 8-36.100 8-52.800 0C57.300 420.700 16.500 239.200 16 140c-.1-26.200 16.300-47.900 38.300-57.200L242.700 2.900C246.800 1 251.400 0 256 0z"/></svg>
<div class="t " style="left:1851.6px;top:310px;font-size:14.8px;line-height:16px;height:16px;letter-spacing:-0.67px;font-weight:bold;-webkit-text-stroke:0;color:#fff;">Configure</div>
<div class="t " style="left:1832px;top:334px;font-size:14.8px;line-height:16px;height:16px;letter-spacing:-0.8px;font-weight:bold;-webkit-text-stroke:0;color:#fff;">Associations</div>
<div class="t " style="left:606.6px;top:395px;font-size:12.9px;line-height:15px;height:15px;letter-spacing:0.44px;font-weight:bold;-webkit-text-stroke:0;color:#212529;">Intent</div>
<div class="abs" style="left:652px;top:387.3px;width:190.6px;height:30.3px;background:#fff;border:1px solid #ced4da;border-radius:4px"></div>
<div class="t " style="left:661.7px;top:395px;font-size:12.9px;line-height:15px;height:15px;letter-spacing:0.21px;color:#343a40;">default1</div>
<svg class="ic" width="9.5" height="9.5" viewBox="0 0 512 512" fill="#343a40" style="color:#343a40;left:823.800px;top:398px"><path d="M76 176 L256 360 L436 176" fill="none" stroke="currentColor" stroke-width="68" stroke-linecap="round" stroke-linejoin="round"/></svg>
<div class="t " style="left:851.7px;top:395px;font-size:12.9px;line-height:15px;height:15px;letter-spacing:-0.36px;color:#212529;">(Object Class: NOT FOUND)</div>
<div class="t " style="left:1731.9px;top:395px;font-size:12.9px;line-height:15px;height:15px;letter-spacing:-0.26px;font-weight:bold;-webkit-text-stroke:0;color:#212529;">Search In:</div>
<div class="abs" style="left:1801.3px;top:387.3px;width:80.6px;height:30.3px;background:#f8f9fa;border:1px solid #dcdfe3;border-radius:4px 0 0 4px"></div>
<div class="abs" style="left:1880.9px;top:387.3px;width:70.9px;height:30.3px;background:#e9ecef;border:1px solid #dcdfe3;border-radius:0 4px 4px 0"></div>
<div class="t " style="left:1809.8px;top:395px;font-size:12.9px;line-height:15px;height:15px;letter-spacing:0.14px;color:#343a40;">Repository</div>
<div class="t " style="left:1890.3px;top:395px;font-size:12.9px;line-height:15px;height:15px;letter-spacing:-0.36px;color:#343a40;">Resource</div>
<div class="abs" style="left:1831.1px;top:446.3px;width:72px;height:30.8px;background:#72a9ce;border-radius:4px 0 0 4px"></div>
<div class="abs" style="left:1902.9px;top:446.3px;width:29px;height:30.8px;background:#3583b5;border-radius:0 4px 4px 0"></div>
<svg class="ic" width="13.6" height="13.6" viewBox="0 0 512 512" fill="#fff" style="color:#fff;left:1840.400px;top:454.300px"><path d="M505 442.7L405.3 343c-4.5-4.5-10.6-7-17-7H372c27.6-35.3 44-79.7 44-128C416 93.1 322.9 0 208 0S0 93.1 0 208s93.1 208 208 208c48.3 0 92.7-16.4 128-44v16.3c0 6.4 2.5 12.5 7 17l99.7 99.7c9.4 9.4 24.6 9.4 33.9 0l28.3-28.3c9.4-9.4 9.4-24.6.1-34zM208 336c-70.7 0-128-57.2-128-128 0-70.7 57.2-128 128-128 70.7 0 128 57.2 128 128 0 70.7-57.2 128-128 128z"/></svg>
<div class="t " style="left:1864.6px;top:454px;font-size:12.9px;line-height:15px;height:15px;letter-spacing:-1.16px;font-weight:bold;-webkit-text-stroke:0;color:#fff;">Basic</div>
<svg class="ic" width="7.6" height="12" viewBox="0 0 320 512" fill="#fff" style="color:#fff;left:1915.100px;top:454px"><path d="M31.3 192h257.3c17.8 0 26.7 21.5 14.1 34.1L174.1 354.8c-7.8 7.8-20.5 7.8-28.3 0L17.2 226.1C4.6 213.5 13.5 192 31.3 192z"/></svg>
<div class="abs" style="left:582.2px;top:489px;width:1369.8px;height:1px;background:#dee2e6;"></div>
<div class="abs" style="left:582.2px;top:537.5px;width:1369.8px;height:2px;background:#dee2e6;"></div>
<div class="abs" style="left:582.2px;top:539.5px;width:1369.8px;height:72.5px;background:#e9e9e9;"></div>
<div class="abs" style="left:582.2px;top:612px;width:1369.8px;height:1px;background:#dee2e6;"></div>
<div class="abs" style="left:606px;top:507px;width:14.2px;height:14.2px;background:#fff;border:1.600px solid #6d6d80;border-radius:2.500px"></div>
<div class="abs" style="left:606px;top:557px;width:14.2px;height:14.2px;background:#fff;border:1.600px solid #6d6d80;border-radius:2.500px"></div>
<div class="abs" style="left:606px;top:630.2px;width:14.2px;height:14.2px;background:#fff;border:1.600px solid #6d6d80;border-radius:2.500px"></div>
<div class="t " style="left:700.3px;top:506px;font-size:14.8px;line-height:16px;height:16px;letter-spacing:-0.07px;font-weight:bold;-webkit-text-stroke:0;color:#3583b5;">Name</div>
<div class="t " style="left:840px;top:506px;font-size:14.8px;line-height:16px;height:16px;letter-spacing:0.19px;font-weight:bold;-webkit-text-stroke:0;color:#343a40;">Identifiers</div>
<div class="t " style="left:1063.1px;top:506px;font-size:14.8px;line-height:16px;height:16px;letter-spacing:0.16px;font-weight:bold;-webkit-text-stroke:0;color:#343a40;">Situation</div>
<div class="t " style="left:1267px;top:506px;font-size:14.8px;line-height:16px;height:16px;letter-spacing:0.54px;font-weight:bold;-webkit-text-stroke:0;color:#343a40;">Intent</div>
<div class="t " style="left:1414.3px;top:506px;font-size:14.8px;line-height:16px;height:16px;letter-spacing:0.14px;font-weight:bold;-webkit-text-stroke:0;color:#343a40;">Owner</div>
<div class="t " style="left:1546px;top:506px;font-size:14.8px;line-height:16px;height:16px;letter-spacing:-0.07px;font-weight:bold;-webkit-text-stroke:0;color:#343a40;">Pending operations</div>
<svg class="ic" width="31.500" height="25.2" viewBox="0 0 640 512" fill="#3d4349" style="color:#3d4349;left:644.200px;top:553.1px"><path d="M144 0a80 80 0 1 1 0 160A80 80 0 1 1 144 0zM512 0a80 80 0 1 1 0 160A80 80 0 1 1 512 0zM0 298.700C0 239.800 47.800 192 106.700 192h42.700c15.900 0 31 3.500 44.600 9.700c-1.300 7.200-1.900 14.700-1.900 22.300c0 38.200 16.800 72.500 43.300 96c-.2 0-.4 0-.7 0H21.300C9.600 320 0 310.400 0 298.700zM405.300 320c-.2 0-.4 0-.7 0c26.600-23.500 43.300-57.800 43.300-96c0-7.600-.7-15-1.900-22.300c13.600-6.300 28.700-9.700 44.600-9.700h42.700C592.200 192 640 239.800 640 298.700c0 11.800-9.600 21.300-21.300 21.300H405.300zM224 224a96 96 0 1 1 192 0 96 96 0 1 1 -192 0zM128 485.300C128 411.700 187.700 352 261.300 352H378.700C452.300 352 512 411.700 512 485.300c0 14.700-11.900 26.700-26.700 26.700H154.700c-14.700 0-26.700-11.900-26.700-26.700z"/></svg>
<div class="t " style="left:700.3px;top:556px;font-size:14.8px;line-height:16px;height:16px;letter-spacing:-0.24px;color:#3583b5;">users11</div>
<div class="t " style="left:840px;top:556px;font-size:14.8px;line-height:16px;height:16px;letter-spacing:-0.14px;color:#343a40;">name: users11</div>
<div class="t " style="left:840px;top:580px;font-size:14.8px;line-height:16px;height:16px;letter-spacing:-0.08px;color:#343a40;">id: 11</div>
<div class="t " style="left:1063.1px;top:556px;font-size:14.8px;line-height:16px;height:16px;transform:scaleX(0.9159);transform-origin:0 50%;color:#343a40;">UNMATCHED</div>
<div class="t " style="left:1267px;top:556px;font-size:14.8px;line-height:16px;height:16px;letter-spacing:0.36px;color:#343a40;">default1</div>
<svg class="ic" width="31.500" height="25.2" viewBox="0 0 640 512" fill="#3d4349" style="color:#3d4349;left:644.200px;top:626px"><path d="M144 0a80 80 0 1 1 0 160A80 80 0 1 1 144 0zM512 0a80 80 0 1 1 0 160A80 80 0 1 1 512 0zM0 298.700C0 239.800 47.800 192 106.700 192h42.700c15.900 0 31 3.500 44.600 9.700c-1.300 7.200-1.900 14.700-1.900 22.300c0 38.200 16.800 72.500 43.300 96c-.2 0-.4 0-.7 0H21.300C9.600 320 0 310.400 0 298.700zM405.300 320c-.2 0-.4 0-.7 0c26.600-23.500 43.300-57.800 43.300-96c0-7.600-.7-15-1.900-22.300c13.600-6.300 28.700-9.700 44.600-9.700h42.700C592.200 192 640 239.800 640 298.700c0 11.800-9.600 21.300-21.300 21.300H405.300zM224 224a96 96 0 1 1 192 0 96 96 0 1 1 -192 0zM128 485.300C128 411.700 187.700 352 261.300 352H378.700C452.300 352 512 411.700 512 485.300c0 14.700-11.900 26.700-26.700 26.700H154.700c-14.700 0-26.700-11.900-26.700-26.700z"/></svg>
<div class="t " style="left:700.3px;top:629px;font-size:14.8px;line-height:16px;height:16px;letter-spacing:-0.43px;color:#3583b5;">users12</div>
<div class="t " style="left:840px;top:629px;font-size:14.8px;line-height:16px;height:16px;letter-spacing:-0.23px;color:#343a40;">name: users12</div>
<div class="t " style="left:840px;top:653px;font-size:14.8px;line-height:16px;height:16px;letter-spacing:-0.3px;color:#343a40;">id: 12</div>
<div class="t " style="left:1063.1px;top:629px;font-size:14.8px;line-height:16px;height:16px;transform:scaleX(0.9159);transform-origin:0 50%;color:#343a40;">UNMATCHED</div>
<div class="t " style="left:1267px;top:629px;font-size:14.8px;line-height:16px;height:16px;letter-spacing:0.36px;color:#343a40;">default1</div>
<div class="abs" style="left:582.2px;top:818.3px;width:1369.8px;height:55px;background:#f5f5f5;box-shadow:0 1px 2px rgba(0,0,0,.16);border-radius:0 0 4px 4px"></div>
<div class="abs" style="left:602px;top:830px;width:93.8px;height:30.7px;background:#3583b5;border-radius:4px"></div>
<svg class="ic" width="13" height="13" viewBox="0 0 512 512" fill="#fff" style="color:#fff;left:611.800px;top:838.600px"><path d="M440 256 A184 184 0 1 1 380 120" fill="none" stroke="currentColor" stroke-width="64" stroke-linecap="round"/><path d="M470 30 V210 H290z"/></svg>
<div class="t " style="left:629.6px;top:838px;font-size:12.9px;line-height:15px;height:15px;letter-spacing:-0.75px;font-weight:bold;-webkit-text-stroke:0;color:#fff;">Reclassify</div>
<div class="abs" style="left:704.1px;top:830px;width:32px;height:30.7px;background:#f8f9fa;border:1px solid #dcdfe3;border-radius:4px"></div>
<div class="abs" style="left:735.1px;top:830px;width:32.4px;height:30.7px;background:#f8f9fa;border:1px solid #dcdfe3;border-radius:4px"></div>
<div class="abs" style="left:767.5px;top:830px;width:33px;height:30.7px;background:#f8f9fa;border:1px solid #dcdfe3;border-radius:4px"></div>
<div class="abs" style="left:809.2px;top:830px;width:32.4px;height:30.7px;background:#f8f9fa;border:1px solid #dcdfe3;border-radius:4px"></div>
<div class="abs" style="left:841.2px;top:830px;width:27.6px;height:30.7px;background:#f8f9fa;border:1px solid #dcdfe3;border-radius:4px"></div>
<svg class="ic" width="14.4" height="14.4" viewBox="0 0 512 512" fill="#33383d" style="color:#33383d;left:712.800px;top:837.500px"><g fill="none" stroke="currentColor" stroke-width="64" stroke-linecap="round" stroke-linejoin="round"><path d="M256 340 V50"/><path d="M140 160 L256 44 L372 160"/></g><path d="M64 352 h110 v20 c0 30 24 54 54 54 h56 c30 0 54-24 54-54 v-20 h110 c35 0 64 29 64 64 v32 c0 35-29 64-64 64 H64 c-35 0-64-29-64-64 v-32 c0-35 29-64 64-64z"/></svg>
<svg class="ic" width="14.4" height="14.4" viewBox="0 0 512 512" fill="#33383d" style="color:#33383d;left:743.800px;top:837.500px"><g fill="none" stroke="currentColor" stroke-width="64" stroke-linecap="round" stroke-linejoin="round"><path d="M256 40 V340"/><path d="M140 230 L256 346 L372 230"/></g><path d="M64 352 h80 l70 70 c23 23 61 23 84 0 l70-70 h80 c35 0 64 29 64 64 v32 c0 35-29 64-64 64 H64 c-35 0-64-29-64-64 v-32 c0-35 29-64 64-64z"/></svg>
<svg class="ic" width="15.4" height="13.6" viewBox="0 0 576 512" fill="#33383d" style="color:#33383d;left:775.800px;top:838.200px"><path d="M304 240 V16 C304 7 311 0 320 0 C444 0 544 100 544 224 c0 9-7 16-16 16 H304z M32 272 C32 150 122 50 239 34 c9-1 17 6 17 16 V288 L412 444 c7 7 6 18-2 23 C371 495 323 512 272 512 C139 512 32 405 32 272z M559 288 c10 0 17 8 16 17 c-8 57-35 107-75 144 c-6 6-16 5-22-1 L320 288 H559z"/></svg>
<svg class="ic" style="left:788.600px;top:847.500px" width="8" height="8" viewBox="0 0 8 8"><path d="M4 0.500V7.500M0.500 4H7.500" stroke="#128a1a" stroke-width="1.100" fill="none"/></svg>
<svg class="ic" width="14" height="14" viewBox="0 0 512 512" fill="#33383d" style="color:#33383d;left:817.600px;top:838.200px"><g fill="none" stroke="currentColor" stroke-width="76" stroke-linecap="round" stroke-linejoin="round"><path d="M64 216A198 198 0 0 1 414 148"/><path d="M448 296A198 198 0 0 1 98 364"/></g><path d="M476 30V216H290z M36 482V296H222z"/></svg>
<svg class="ic" width="11.8" height="13.5" viewBox="0 0 448 512" fill="#33383d" style="color:#33383d;left:849.300px;top:838.200px"><path d="M424.4 214.7L72.4 6.6C43.8-10.3 0 6.1 0 47.9V464c0 37.5 40.7 60.1 72.4 41.3l352-208c31.4-18.5 31.5-64.1 0-82.6z"/></svg>
<div class="t " style="left:1114.5px;top:838px;font-size:14.8px;line-height:16px;height:16px;letter-spacing:-0.3px;color:#343a40;">Rows per page</div>
<div class="abs" style="left:1219.2px;top:830px;width:56.4px;height:30.7px;background:#fff;border:1px solid #ced4da;border-radius:4px"></div>
<div class="t " style="left:1227.9px;top:838px;font-size:12.9px;line-height:15px;height:15px;letter-spacing:-0.35px;color:#343a40;">20</div>
<svg class="ic" width="9" height="9" viewBox="0 0 512 512" fill="#343a40" style="color:#343a40;left:1261.500px;top:841.300px"><path d="M76 176 L256 360 L436 176" fill="none" stroke="currentColor" stroke-width="68" stroke-linecap="round" stroke-linejoin="round"/></svg>
<div class="t " style="left:1300.1px;top:838px;font-size:14.8px;line-height:16px;height:16px;letter-spacing:0.11px;color:#343a40;">Displaying 1 to 20, unknown number of matching results.</div>
<div class="abs" style="left:1702.3px;top:830px;width:229.3px;height:30.7px;background:#fff;border:1px solid #dee2e6;border-radius:4px"></div>
<div class="t " style="left:1702.3px;top:838px;font-size:12.9px;line-height:15px;height:15px;width:31px;text-align:center;color:#3583b5;">&lt;&lt;</div>
<div class="abs" style="left:1733.3px;top:830px;width:1px;height:30.7px;background:#dee2e6;"></div>
<div class="t " style="left:1733.3px;top:838px;font-size:12.9px;line-height:15px;height:15px;width:23.9px;text-align:center;color:#3583b5;">&lt;</div>
<div class="abs" style="left:1757.2px;top:830px;width:24.7px;height:30.7px;background:#3583b5;"></div>
<div class="t " style="left:1757.2px;top:838px;font-size:12.9px;line-height:15px;height:15px;width:24.2px;text-align:center;color:#fff;">1</div>
<div class="abs" style="left:1781.4px;top:830px;width:1px;height:30.7px;background:#dee2e6;"></div>
<div class="t " style="left:1781.4px;top:838px;font-size:12.9px;line-height:15px;height:15px;width:24px;text-align:center;color:#3583b5;">2</div>
<div class="abs" style="left:1805.4px;top:830px;width:1px;height:30.7px;background:#dee2e6;"></div>
<div class="t " style="left:1805.4px;top:838px;font-size:12.9px;line-height:15px;height:15px;width:24px;text-align:center;color:#3583b5;">3</div>
<div class="abs" style="left:1829.4px;top:830px;width:1px;height:30.7px;background:#dee2e6;"></div>
<div class="t " style="left:1829.4px;top:838px;font-size:12.9px;line-height:15px;height:15px;width:23.9px;text-align:center;color:#3583b5;">4</div>
<div class="abs" style="left:1853.3px;top:830px;width:1px;height:30.7px;background:#dee2e6;"></div>
<div class="t " style="left:1853.3px;top:838px;font-size:12.9px;line-height:15px;height:15px;width:23.9px;text-align:center;color:#3583b5;">5</div>
<div class="abs" style="left:1877.2px;top:830px;width:1px;height:30.7px;background:#dee2e6;"></div>
<div class="t " style="left:1877.2px;top:838px;font-size:12.9px;line-height:15px;height:15px;width:24.1px;text-align:center;color:#3583b5;">&gt;</div>
<div class="abs" style="left:1901.3px;top:830px;width:1px;height:30.7px;background:#dee2e6;"></div>
<div class="t " style="left:1901.3px;top:838px;font-size:12.9px;line-height:15px;height:15px;width:30.3px;text-align:center;color:#3583b5;">&gt;&gt;</div>
<div class="abs" style="left:582.2px;top:905px;width:1369.8px;height:70px;background:#fff;border-top:3px solid #00183a;border-radius:4px;box-shadow:0 0 1px rgba(0,0,0,.125),0 1px 3px rgba(0,0,0,.2)"></div>
<div class="abs" style="left:582.2px;top:953px;width:1369.8px;height:1px;background:#dfe1e4;"></div>
<div class="t " style="left:602.7px;top:922px;font-size:16.3px;line-height:18px;height:18px;letter-spacing:0.09px;color:#343a40;">Synchronization tasks</div>
<div class="abs" style="left:1742px;top:497px;width:160px;height:305px;background:#fff;border:1px solid rgba(0,0,0,.15);border-radius:4px;box-shadow:0 8px 16px rgba(0,0,0,.175)"></div>
<div class="abs" style="left:1743px;top:602px;width:158px;height:32px;background:#f6f7f9;"></div>
<div class="t " style="left:1759.1px;top:515px;font-size:14.8px;line-height:16px;height:16px;letter-spacing:-0.04px;color:#212529;">Enable</div>
<div class="t " style="left:1759.1px;top:547px;font-size:14.8px;line-height:16px;height:16px;letter-spacing:-0.03px;color:#212529;">Disable</div>
<div class="t " style="left:1759.1px;top:579px;font-size:14.8px;line-height:16px;height:16px;letter-spacing:-0.12px;color:#212529;">Delete</div>
<div class="t " style="left:1759.1px;top:611px;font-size:14.8px;line-height:16px;height:16px;letter-spacing:0.39px;color:#212529;">Import preview</div>
<div class="t " style="left:1759.1px;top:643px;font-size:14.8px;line-height:16px;height:16px;letter-spacing:0.77px;color:#212529;">Import</div>
<div class="t " style="left:1759.1px;top:675px;font-size:14.8px;line-height:16px;height:16px;letter-spacing:0.03px;color:#212529;">Remove owner</div>
<div class="t " style="left:1759.1px;top:707px;font-size:14.8px;line-height:16px;height:16px;letter-spacing:-0.02px;color:#212529;">Change owner</div>
<div class="t " style="left:1759.1px;top:739px;font-size:14.8px;line-height:16px;height:16px;letter-spacing:-0.08px;color:#212529;">Mark as Protected</div>
<div class="t " style="left:1759.1px;top:771px;font-size:14.8px;line-height:16px;height:16px;letter-spacing:-0.19px;color:#212529;">Add Marks</div>

</div>
<svg class="ic" style="left:1974px;top:942px" width="13" height="13" viewBox="0 0 13 13"><g stroke="#666" stroke-width="1.150"><path d="M1 12.500 L12.500 1"/><path d="M5 12.500 L12.500 5"/><path d="M9 12.500 L12.500 9"/></g></svg>

</body>
</html>
